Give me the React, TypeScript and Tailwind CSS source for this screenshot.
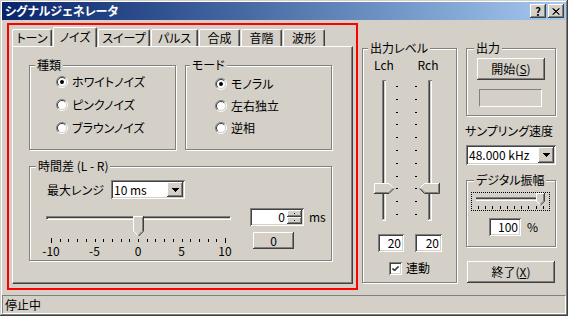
import React from 'react';

// Win2000 style bevels
const raised = 'shadow-[inset_-1px_-1px_0_#404040,inset_1px_1px_0_#ffffff,inset_-2px_-2px_0_#808080,inset_2px_2px_0_#d4d0c8]';
const sunken = 'shadow-[inset_1px_1px_0_#808080,inset_-1px_-1px_0_#ffffff,inset_2px_2px_0_#404040,inset_-2px_-2px_0_#d4d0c8]';
const etched = 'border border-[#808080] shadow-[inset_1px_1px_0_#ffffff,1px_1px_0_#ffffff]';

const Group: React.FC<{ label: string; left: string; className: string; children?: React.ReactNode }> = ({ label, left, className, children }) => (
  <div className={`relative shrink-0 ${etched} ${className}`}>
    <span className={`absolute -top-[8px] ${left} bg-[#d4d0c8] px-[2px] leading-[14px] whitespace-nowrap`}>{label}</span>
    {children}
  </div>
);

const Radio: React.FC<{ checked?: boolean; label: string }> = ({ checked, label }) => (
  <div className="flex items-center gap-[4px] h-[12px]">
    <svg width="12" height="12" viewBox="0 0 12 12" className="shrink-0">
      <circle cx="6" cy="6" r="4.5" fill="#ffffff" />
      <path d="M2.1 9.9 A5.5 5.5 0 0 1 9.9 2.1" fill="none" stroke="#808080" />
      <path d="M9.9 2.1 A5.5 5.5 0 0 1 2.1 9.9" fill="none" stroke="#ffffff" />
      <path d="M2.8 9.2 A4.5 4.5 0 0 1 9.2 2.8" fill="none" stroke="#404040" />
      <path d="M9.2 2.8 A4.5 4.5 0 0 1 2.8 9.2" fill="none" stroke="#d4d0c8" />
      {checked && <circle cx="6" cy="6" r="2" fill="#000000" />}
    </svg>
    <span className="leading-[14px] whitespace-nowrap">{label}</span>
  </div>
);

const DownArrow = () => (
  <svg width="7" height="4" viewBox="0 0 7 4">
    <rect x="0" y="0" width="7" height="1" fill="#000" />
    <rect x="1" y="1" width="5" height="1" fill="#000" />
    <rect x="2" y="2" width="3" height="1" fill="#000" />
    <rect x="3" y="3" width="1" height="1" fill="#000" />
  </svg>
);

const Combo: React.FC<{ value: string; className: string }> = ({ value, className }) => (
  <div className={`flex bg-white p-[2px] ${sunken} ${className}`}>
    <span className="flex-1 pl-[1px] leading-[15px] whitespace-nowrap">{value}</span>
    <div className={`w-[16px] bg-[#d4d0c8] flex items-center justify-center ${raised}`}>
      <DownArrow />
    </div>
  </div>
);

const Edit: React.FC<{ value: string; className: string }> = ({ value, className }) => (
  <div className={`bg-white flex items-center justify-end pr-[3px] leading-[14px] ${sunken} ${className}`}>{value}</div>
);

const Button: React.FC<{ className: string; children: React.ReactNode }> = ({ className, children }) => (
  <div className={`bg-[#d4d0c8] flex items-center justify-center leading-[14px] whitespace-nowrap ${raised} ${className}`}>{children}</div>
);

const tabs = [
  { label: 'トーン', w: 'w-[40px]' },
  { label: 'ノイズ', w: 'w-[44px]', active: true },
  { label: 'スイープ', w: 'w-[52px]' },
  { label: 'パルス', w: 'w-[47px]' },
  { label: '合成', w: 'w-[41px]' },
  { label: '音階', w: 'w-[41px]' },
  { label: '波形', w: 'w-[42px]' },
];

const HThumb = () => (
  <svg width="11" height="20" viewBox="0 0 11 20">
    <polygon points="0,0 11,0 11,15 5.5,20.5 0,15" fill="#d4d0c8" />
    <polyline points="0.5,15 0.5,0.5 10,0.5" fill="none" stroke="#ffffff" />
    <polyline points="0.5,15 5,19.5" fill="none" stroke="#ffffff" />
    <polyline points="9.5,1 9.5,15 5.2,19.3" fill="none" stroke="#808080" />
    <polyline points="10.5,0 10.5,15.2 5.5,20.2" fill="none" stroke="#404040" />
  </svg>
);

const TimeSlider = () => {
  const ticks = Array.from({ length: 21 }, (_, i) => 15 + i * 8.7);
  return (
    <div className="w-[205px] pt-[1px] shrink-0">
      <div className="relative h-[20px]">
        <div className="ml-[10px] mt-[7px] w-[185px] h-[4px] border-t border-l border-t-[#808080] border-l-[#808080] border-b border-r border-b-white border-r-white shadow-[inset_1px_1px_0_#404040]" />
        <div className="absolute top-0 left-[97px]">
          <HThumb />
        </div>
      </div>
      <svg width="205" height="5" className="mt-[2px] block">
        {ticks.map((x, i) => (
          <rect key={i} x={Math.round(x)} y={i === 0 || i === 20 ? 0 : 1} width="1" height={i === 0 || i === 20 ? 5 : 3} fill="#000" />
        ))}
      </svg>
      <div className="flex gap-[13.5px] mt-[2px] leading-[12px]">
        {['-10', '-5', '0', '5', '10'].map(t => (
          <span key={t} className="w-[30px] text-center">{t}</span>
        ))}
      </div>
    </div>
  );
};

const LevelSliders = () => {
  const dashes = Array.from({ length: 11 }, (_, i) => Math.round(9 + i * 12.8));
  const track = (x: number) => (
    <g>
      <rect x={x} y="3" width="1" height="140" fill="#808080" />
      <rect x={x + 1} y="4" width="1" height="138" fill="#404040" />
      <rect x={x + 2} y="4" width="1" height="138" fill="#d4d0c8" />
      <rect x={x + 3} y="3" width="1" height="141" fill="#ffffff" />
      <rect x={x} y="3" width="4" height="1" fill="#808080" />
      <rect x={x} y="143" width="4" height="1" fill="#ffffff" />
    </g>
  );
  return (
    <svg width="70" height="146" className="block ml-[9px] mt-[5px]">
      {track(10)}
      {track(56)}
      {dashes.map(y => (
        <g key={y}>
          <rect x="24" y={y} width="2" height="1" fill="#000" />
          <rect x="43" y={y} width="2" height="1" fill="#000" />
        </g>
      ))}
      {/* left thumb, pointing right */}
      <polygon points="2,106 17,106 22.5,111.5 17,117 2,117" fill="#d4d0c8" />
      <polyline points="2.5,116 2.5,106.5 17,106.5 21.5,111" fill="none" stroke="#ffffff" />
      <polyline points="2,116.5 17,116.5 22,111.5" fill="none" stroke="#404040" />
      <polyline points="3,115.5 16.8,115.5 21,111.4" fill="none" stroke="#808080" />
      {/* right thumb, pointing left */}
      <polygon points="47,111.5 52.5,106 68,106 68,117 52.5,117" fill="#d4d0c8" />
      <polyline points="47.5,111.5 52.5,106.5 67,106.5" fill="none" stroke="#ffffff" />
      <polyline points="47.5,111.5 52.5,116.5 67.5,116.5 67.5,106" fill="none" stroke="#404040" />
      <polyline points="48.8,111.6 53,115.5 66.5,115.5 66.5,107" fill="none" stroke="#808080" />
    </svg>
  );
};

const AmpSlider = () => {
  const ticks = Array.from({ length: 10 }, (_, i) => Math.round(6 + i * 7.2));
  return (
    <svg width="77" height="17" className="block">
      <rect x="4" y="4" width="68" height="1" fill="#808080" />
      <rect x="4" y="5" width="68" height="1" fill="#404040" />
      <rect x="4" y="6" width="68" height="1" fill="#d4d0c8" />
      <rect x="4" y="7" width="69" height="1" fill="#ffffff" />
      <rect x="72" y="4" width="1" height="4" fill="#ffffff" />
      {ticks.map(x => (
        <rect key={x} x={x} y="13" width="1" height="3" fill="#000" />
      ))}
      <polygon points="64,0 73,0 73,8 68.5,12.5 64,8" fill="#d4d0c8" />
      <polyline points="64.5,8 64.5,0.5 72,0.5" fill="none" stroke="#ffffff" />
      <polyline points="64.5,8 68.5,12" fill="none" stroke="#ffffff" />
      <polyline points="72.5,0 72.5,8.2 68.5,12.2" fill="none" stroke="#404040" />
      <polyline points="71.5,1 71.5,8 68.5,11" fill="none" stroke="#808080" />
    </svg>
  );
};

export default function App() {
  return (
    <div className="w-[568px] h-[316px] bg-[#d4d0c8] flex flex-col p-[2px] overflow-hidden text-[12px] text-black font-['Noto_Sans_CJK_JP',sans-serif] [font-feature-settings:'palt'] shadow-[inset_-1px_-1px_0_#404040,inset_1px_1px_0_#d4d0c8,inset_-2px_-2px_0_#808080,inset_2px_2px_0_#ffffff]">
      {/* title bar */}
      <div className="h-[18px] shrink-0 flex items-center bg-linear-to-r from-[#0a246a] to-[#a6caf0] pl-[3px] pr-[2px]">
        <span className="flex-1 text-white font-bold leading-[14px]">シグナルジェネレータ</span>
        <Button className="w-[16px] h-[14px] font-bold text-[11px]">?</Button>
        <Button className="w-[16px] h-[14px] ml-[2px]">
          <svg width="8" height="7" viewBox="0 0 8 7">
            <path d="M0.5 0.5 L7 6.5 M1.5 0.5 L7.5 6.5 M7 0.5 L0.5 6.5 M7.5 0.5 L1 6.5" stroke="#000" strokeWidth="1" />
          </svg>
        </Button>
      </div>

      {/* body */}
      <div className="h-[275px] shrink-0 flex">
        {/* red highlighted tab control */}
        <div className="ml-[5px] mt-[3px] w-[351px] h-[267px] border-2 border-[#ff0000] pt-[2px] pl-[1px] shrink-0">
          <div className="flex items-end h-[19px] pl-[2px]">
            {tabs.map(t =>
              t.active ? (
                <div key={t.label} className={`relative z-10 ${t.w} h-[20px] -mb-[1px] ml-[1px] bg-[#d4d0c8] border-t border-l border-t-white border-l-white border-r border-r-[#404040] shadow-[inset_-1px_0_0_#808080] rounded-t-[2px] flex items-start justify-center pt-[2px] leading-[14px]`}>
                  {t.label}
                </div>
              ) : (
                <div key={t.label} className={`${t.w} h-[17px] ml-[1px] first:ml-0 border-t border-l border-t-white border-l-white border-r border-r-[#404040] shadow-[inset_-1px_0_0_#808080] rounded-t-[2px] flex items-center justify-center leading-[14px]`}>
                  {t.label}
                </div>
              )
            )}
          </div>
          <div className="w-[341px] h-[238px] ml-[2px] border border-t-white border-l-white border-r-[#404040] border-b-[#404040] shadow-[inset_-1px_-1px_0_#808080] pl-[16px] pt-[18px]">
            <div className="flex gap-[9px]">
              <Group label="種類" left="left-[5px]" className="w-[147px] h-[85px] pl-[26px] pt-[10px]">
                <div className="flex flex-col gap-[11px]">
                  <Radio checked label="ホワイトノイズ" />
                  <Radio label="ピンクノイズ" />
                  <Radio label="ブラウンノイズ" />
                </div>
              </Group>
              <Group label="モード" left="left-[4px]" className="w-[147px] h-[85px] pl-[29px] pt-[12px]">
                <div className="flex flex-col gap-[10px]">
                  <Radio checked label="モノラル" />
                  <Radio label="左右独立" />
                  <Radio label="逆相" />
                </div>
              </Group>
            </div>
            <Group label="時間差 (L - R)" left="left-[6px]" className="mt-[16px] w-[303px] h-[95px] pt-[13px]">
              <div className="flex items-center pl-[17px]">
                <span className="w-[64px] leading-[14px]">最大レンジ</span>
                <Combo value="10 ms" className="w-[74px] h-[19px]" />
              </div>
              <div className="flex mt-[9px] pl-[6px]">
                <TimeSlider />
                <div className="ml-[9px] flex flex-col">
                  <div className="flex items-center">
                    <div className={`w-[54px] h-[18px] bg-white flex p-[2px] ${sunken}`}>
                      <span className="flex-1 text-right pr-[2px] leading-[14px]">0</span>
                      <div className="w-[15px] flex flex-col">
                        <div className={`flex-1 bg-[#d4d0c8] flex items-center justify-center ${raised}`}>
                          <div className="w-[1px] h-[1px] bg-black" />
                        </div>
                        <div className={`flex-1 bg-[#d4d0c8] flex items-center justify-center ${raised}`}>
                          <div className="w-[1px] h-[1px] bg-black" />
                        </div>
                      </div>
                    </div>
                    <span className="ml-[5px] leading-[14px]">ms</span>
                  </div>
                  <Button className="ml-[3px] mt-[6px] w-[41px] h-[17px]">0</Button>
                </div>
              </div>
            </Group>
          </div>
        </div>

        {/* output level */}
        <Group label="出力レベル" left="left-[5px]" className="ml-[4px] mt-[28px] w-[95px] h-[235px]">
          <div className="flex gap-[4px] pl-[1px] mt-[9px] leading-[14px]">
            <span className="w-[40px] text-center">Lch</span>
            <span className="w-[40px] text-center">Rch</span>
          </div>
          <LevelSliders />
          <div className="flex gap-[11px] pl-[15px] mt-[11px]">
            <Edit value="20" className="w-[26px] h-[18px]" />
            <Edit value="20" className="w-[27px] h-[18px]" />
          </div>
          <div className="flex items-center pl-[26px] mt-[9px]">
            <div className={`w-[13px] h-[13px] bg-white flex items-center justify-center ${sunken}`}>
              <svg width="7" height="7" viewBox="0 0 7 7">
                <path d="M0.5 3 L2.5 5 L6.5 1 M0.5 4 L2.5 6 L6.5 2" stroke="#000" fill="none" />
              </svg>
            </div>
            <span className="ml-[4px] leading-[14px]">連動</span>
          </div>
        </Group>

        {/* right column */}
        <div className="ml-[9px] mt-[28px] w-[90px] flex flex-col shrink-0">
          <Group label="出力" left="left-[7px]" className="w-[90px] h-[68px] pl-[10px] pt-[9px]">
            <Button className="w-[68px] h-[22px]">
              開始(<u>S</u>)
            </Button>
            <div className="ml-[2px] mt-[9px] w-[63px] h-[18px] border border-t-[#808080] border-l-[#808080] border-b-white border-r-white" />
          </Group>
          <span className="mt-[8px] -ml-[1px] leading-[14px] whitespace-nowrap">サンプリング速度</span>
          <Combo value="48.000 kHz" className="mt-[7px] w-[90px] h-[20px]" />
          <Group label="デジタル振幅" left="left-[7px]" className="mt-[15px] w-[90px] h-[67px] pl-[4px] pt-[11px]">
            <div className="w-[79px] h-[19px] border border-dotted border-black">
              <AmpSlider />
            </div>
            <div className="flex items-center ml-[18px] mt-[7px]">
              <Edit value="100" className="w-[32px] h-[18px]" />
              <span className="ml-[6px] leading-[14px]">%</span>
            </div>
          </Group>
          <Button className="mt-[14px] ml-[1px] w-[88px] h-[22px]">
            終了(<u>X</u>)
          </Button>
        </div>
      </div>

      {/* status bar */}
      <div className="h-[19px] shrink-0 border border-t-[#808080] border-l-[#808080] border-b-white border-r-white flex items-center pl-[2px] leading-[14px]">
        停止中
      </div>
    </div>
  );
}
